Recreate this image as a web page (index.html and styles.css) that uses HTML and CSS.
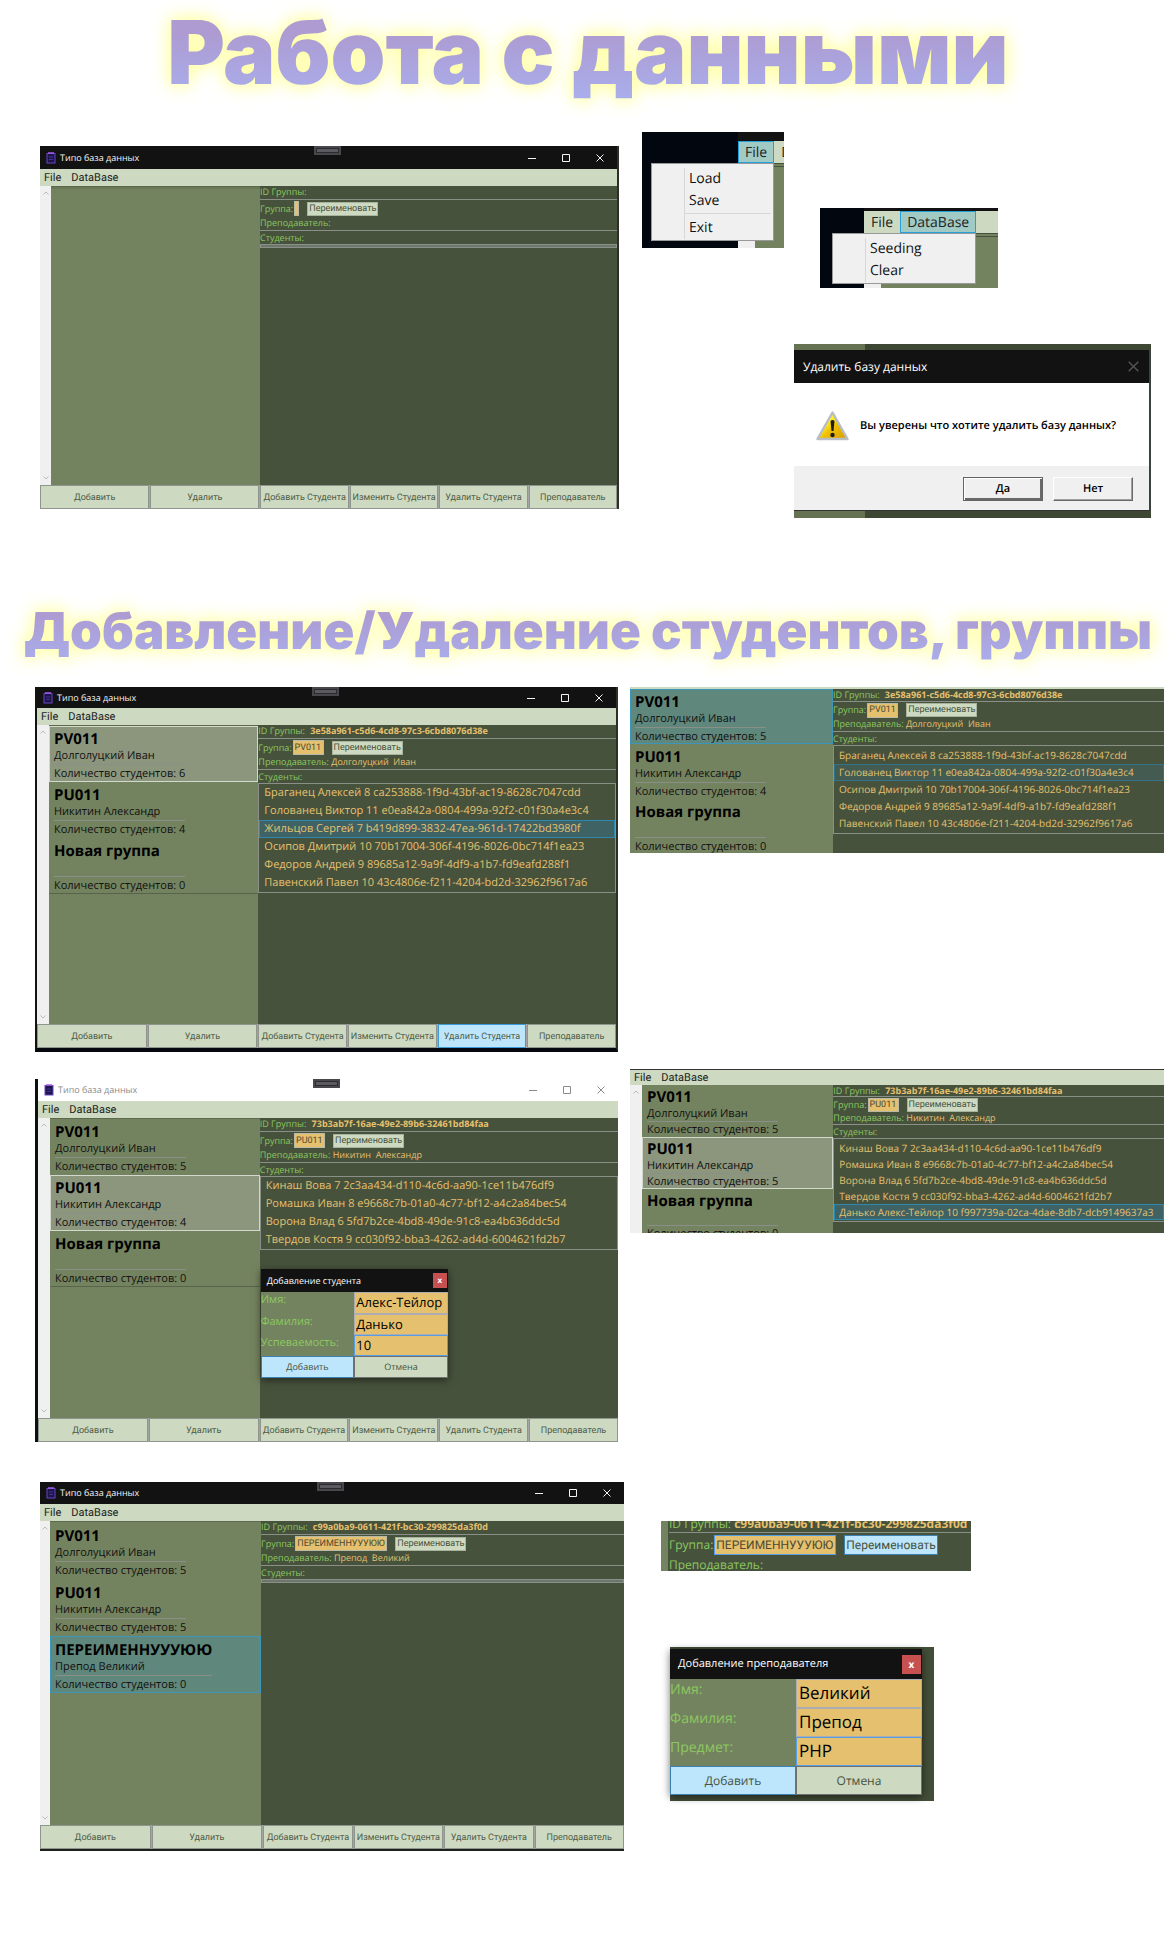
FILE: index.html
```html
<!DOCTYPE html>
<html lang="ru">
<head>
<meta charset="utf-8">
<meta name="viewport" content="width=device-width, initial-scale=1">
<title>Типо база данных</title>
<link rel="stylesheet" href="styles.css">
</head>
<body>
<svg class="sprite" aria-hidden="true">
  <symbol id="app" viewBox="0 0 10 12"><rect x="1" y="1.5" width="8" height="9.5" fill="#1d1548" stroke="#6a45c8"/><path d="M2 1h6" stroke="#a45cf0" stroke-width="1.5"/><path d="M3 5h4M3 7.500h4" stroke="#40349a"/></symbol>
  <symbol id="min" viewBox="0 0 8 8"><path d="M0 4.500h8" stroke="currentColor"/></symbol>
  <symbol id="max" viewBox="0 0 8 8"><path d="M.5.5h7v7h-7z" fill="none" stroke="currentColor"/></symbol>
  <symbol id="close" viewBox="0 0 8 8"><path d="M.5.5l7 7M7.500.5l-7 7" fill="none" stroke="currentColor"/></symbol>
  <symbol id="up" viewBox="0 0 6 4"><path d="M.5 3.500L3 1l2.500 2.500" fill="none" stroke="currentColor"/></symbol>
  <symbol id="down" viewBox="0 0 6 4"><path d="M.5.5L3 3 5.500.5" fill="none" stroke="currentColor"/></symbol>
</svg>

<main>
<section class="data">
  <h1>Работа с данными</h1>
  <div class="data-grid">
    <article class="window first">
      <header class="titlebar"><svg class="logo"><use href="#app"/></svg><span>Типо база данных</span><i class="grip"></i>
        <button aria-label="Свернуть"><svg><use href="#min"/></svg></button><button aria-label="Развернуть"><svg><use href="#max"/></svg></button><button aria-label="Закрыть"><svg><use href="#close"/></svg></button></header>
      <nav class="menubar"><button>File</button><button>DataBase</button></nav>
      <div class="workspace">
        <div class="scroll"><svg><use href="#up"/></svg><svg><use href="#down"/></svg></div>
        <ul class="groups empty"></ul>
        <div class="details">
          <p class="id">ID Группы:</p>
          <div class="rename"><label for="n1">Группа:</label><input id="n1" class="none" value=""><button>Переименовать</button></div>
          <p class="teacher">Преподаватель:</p>
          <p class="caption">Студенты:</p>
          <ul class="students"></ul>
        </div>
      </div>
      <footer class="actions"><button>Добавить</button><button>Удалить</button><button>Добавить Студента</button><button>Изменить Студента</button><button>Удалить Студента</button><button>Преподаватель</button></footer>
    </article>

    <div class="popups">
      <div class="menus">
        <div class="snip file-snip">
          <div class="corner">
            <nav class="menubar big"><button class="open">File</button><button>DataBase</button></nav>
            <div class="under"></div>
          </div>
          <div class="dropdown"><button>Load</button><button>Save</button><hr><button>Exit</button></div>
        </div>
        <div class="snip base-snip">
          <div class="corner">
            <nav class="menubar big"><button>File</button><button class="open">DataBase</button></nav>
            <div class="under"></div>
          </div>
          <div class="dropdown"><button>Seeding</button><button>Clear</button></div>
        </div>
      </div>
      <div class="confirm-back">
        <div class="confirm" role="dialog" aria-labelledby="ct">
          <header><span id="ct">Удалить базу данных</span><button aria-label="Закрыть"><svg><use href="#close"/></svg></button></header>
          <div class="message">
            <svg viewBox="0 0 33 30"><defs><linearGradient id="w" x1="0" y1="0" x2="1" y2="1"><stop offset=".35" stop-color="#fff02a"/><stop offset=".55" stop-color="#f0c000"/><stop offset="1" stop-color="#d89a00"/></linearGradient></defs><path d="M16.500 1.500L31.500 28h-30z" fill="url(#w)" stroke="#b9bec6" stroke-width="2.500" stroke-linejoin="round"/><path d="M14.500 10q2-2 4 0l-1 10h-2z" fill="#1c1c1c"/><circle cx="16.500" cy="24" r="2.200" fill="#1c1c1c"/></svg>
            <p>Вы уверены что хотите удалить базу данных?</p>
          </div>
          <footer><button class="default">Да</button><button>Нет</button></footer>
        </div>
      </div>
    </div>
  </div>
</section>

<section class="edit">
  <h2>Добавление/Удаление студентов, группы</h2>
  <div class="pair">
    <article class="window second">
      <header class="titlebar"><svg class="logo"><use href="#app"/></svg><span>Типо база данных</span><i class="grip"></i>
        <button aria-label="Свернуть"><svg><use href="#min"/></svg></button><button aria-label="Развернуть"><svg><use href="#max"/></svg></button><button aria-label="Закрыть"><svg><use href="#close"/></svg></button></header>
      <nav class="menubar"><button>File</button><button>DataBase</button></nav>
      <div class="workspace">
        <div class="scroll"><svg><use href="#up"/></svg><svg><use href="#down"/></svg></div>
        <ul class="groups">
          <li class="idle"><div><h3>PV011</h3><p>Долголуцкий Иван</p><p class="count">Количество студентов: 6</p></div></li>
          <li><div><h3>PU011</h3><p>Никитин Александр</p><p class="count">Количество студентов: 4</p></div></li>
          <li><div><h3>Новая группа</h3><p></p><p class="count">Количество студентов: 0</p></div></li>
        </ul>
        <div class="details">
          <p class="id">ID Группы: <b>3e58a961-c5d6-4cd8-97c3-6cbd8076d38e</b></p>
          <div class="rename"><label for="n2">Группа:</label><input id="n2" value="PV011"><button>Переименовать</button></div>
          <p class="teacher">Преподаватель: <span>Долголуцкий&nbsp; Иван</span></p>
          <p class="caption">Студенты:</p>
          <ul class="students">
            <li>Браганец Алексей 8 ca253888-1f9d-43bf-ac19-8628c7047cdd</li>
            <li>Голованец Виктор 11 e0ea842a-0804-499a-92f2-c01f30a4e3c4</li>
            <li class="selected">Жильцов Сергей 7 b419d899-3832-47ea-961d-17422bd3980f</li>
            <li>Осипов Дмитрий 10 70b17004-306f-4196-8026-0bc714f1ea23</li>
            <li>Федоров Андрей 9 89685a12-9a9f-4df9-a1b7-fd9eafd288f1</li>
            <li>Павенский Павел 10 43c4806e-f211-4204-bd2d-32962f9617a6</li>
          </ul>
        </div>
      </div>
      <footer class="actions"><button>Добавить</button><button>Удалить</button><button>Добавить Студента</button><button>Изменить Студента</button><button class="hot">Удалить Студента</button><button>Преподаватель</button></footer>
    </article>

    <article class="fragment removed">
      <div class="workspace">
        <ul class="groups">
          <li class="active"><div><h3>PV011</h3><p>Долголуцкий Иван</p><p class="count">Количество студентов: 5</p></div></li>
          <li><div><h3>PU011</h3><p>Никитин Александр</p><p class="count">Количество студентов: 4</p></div></li>
          <li><div><h3>Новая группа</h3><p></p><p class="count">Количество студентов: 0</p></div></li>
        </ul>
        <div class="details">
          <p class="id">ID Группы: <b>3e58a961-c5d6-4cd8-97c3-6cbd8076d38e</b></p>
          <div class="rename"><label for="n3">Группа:</label><input id="n3" value="PV011"><button>Переименовать</button></div>
          <p class="teacher">Преподаватель: <span>Долголуцкий&nbsp; Иван</span></p>
          <p class="caption">Студенты:</p>
          <ul class="students">
            <li>Браганец Алексей 8 ca253888-1f9d-43bf-ac19-8628c7047cdd</li>
            <li class="selected dim">Голованец Виктор 11 e0ea842a-0804-499a-92f2-c01f30a4e3c4</li>
            <li>Осипов Дмитрий 10 70b17004-306f-4196-8026-0bc714f1ea23</li>
            <li>Федоров Андрей 9 89685a12-9a9f-4df9-a1b7-fd9eafd288f1</li>
            <li>Павенский Павел 10 43c4806e-f211-4204-bd2d-32962f9617a6</li>
          </ul>
        </div>
      </div>
    </article>
  </div>

  <div class="pair adding">
    <article class="window third">
      <header class="titlebar"><svg class="logo"><use href="#app"/></svg><span>Типо база данных</span><i class="grip"></i>
        <button aria-label="Свернуть"><svg><use href="#min"/></svg></button><button aria-label="Развернуть"><svg><use href="#max"/></svg></button><button aria-label="Закрыть"><svg><use href="#close"/></svg></button></header>
      <nav class="menubar"><button>File</button><button>DataBase</button></nav>
      <div class="workspace">
        <div class="scroll"><svg><use href="#up"/></svg><svg><use href="#down"/></svg></div>
        <ul class="groups">
          <li><div><h3>PV011</h3><p>Долголуцкий Иван</p><p class="count">Количество студентов: 5</p></div></li>
          <li class="idle"><div><h3>PU011</h3><p>Никитин Александр</p><p class="count">Количество студентов: 4</p></div></li>
          <li><div><h3>Новая группа</h3><p></p><p class="count">Количество студентов: 0</p></div></li>
        </ul>
        <div class="details">
          <p class="id">ID Группы: <b>73b3ab7f-16ae-49e2-89b6-32461bd84faa</b></p>
          <div class="rename"><label for="n4">Группа:</label><input id="n4" value="PU011"><button>Переименовать</button></div>
          <p class="teacher">Преподаватель: <span>Никитин&nbsp; Александр</span></p>
          <p class="caption">Студенты:</p>
          <ul class="students">
            <li>Кинаш Вова 7 2c3aa434-d110-4c6d-aa90-1ce11b476df9</li>
            <li>Ромашка Иван 8 e9668c7b-01a0-4c77-bf12-a4c2a84bec54</li>
            <li>Ворона Влад 6 5fd7b2ce-4bd8-49de-91c8-ea4b636ddc5d</li>
            <li>Твердов Костя 9 cc030f92-bba3-4262-ad4d-6004621fd2b7</li>
          </ul>
          <form class="form-window small" aria-label="Добавление студента">
            <header><span>Добавление студента</span><button type="button" aria-label="Закрыть">x</button></header>
            <label for="s1">Имя:</label><input id="s1" value="Алекс-Тейлор">
            <label for="s2">Фамилия:</label><input id="s2" value="Данько">
            <label for="s3">Успеваемость:</label><input id="s3" class="focus" value="10">
            <button type="button" class="hot">Добавить</button><button type="button">Отмена</button>
          </form>
        </div>
      </div>
      <footer class="actions"><button>Добавить</button><button>Удалить</button><button>Добавить Студента</button><button>Изменить Студента</button><button>Удалить Студента</button><button>Преподаватель</button></footer>
    </article>

    <article class="fragment added">
      <nav class="menubar"><button>File</button><button>DataBase</button></nav>
      <div class="workspace">
        <div class="scroll"><svg><use href="#up"/></svg></div>
        <ul class="groups">
          <li><div><h3>PV011</h3><p>Долголуцкий Иван</p><p class="count">Количество студентов: 5</p></div></li>
          <li class="idle"><div><h3>PU011</h3><p>Никитин Александр</p><p class="count">Количество студентов: 5</p></div></li>
          <li><div><h3>Новая группа</h3><p></p><p class="count">Количество студентов: 0</p></div></li>
        </ul>
        <div class="details">
          <p class="id">ID Группы: <b>73b3ab7f-16ae-49e2-89b6-32461bd84faa</b></p>
          <div class="rename"><label for="n5">Группа:</label><input id="n5" value="PU011"><button>Переименовать</button></div>
          <p class="teacher">Преподаватель: <span>Никитин&nbsp; Александр</span></p>
          <p class="caption">Студенты:</p>
          <ul class="students">
            <li>Кинаш Вова 7 2c3aa434-d110-4c6d-aa90-1ce11b476df9</li>
            <li>Ромашка Иван 8 e9668c7b-01a0-4c77-bf12-a4c2a84bec54</li>
            <li>Ворона Влад 6 5fd7b2ce-4bd8-49de-91c8-ea4b636ddc5d</li>
            <li>Твердов Костя 9 cc030f92-bba3-4262-ad4d-6004621fd2b7</li>
            <li class="selected">Данько Алекс-Тейлор 10 f997739a-02ca-4dae-8db7-dcb9149637a3</li>
          </ul>
        </div>
      </div>
    </article>
  </div>

  <div class="pair renaming">
    <article class="window fourth">
      <header class="titlebar"><svg class="logo"><use href="#app"/></svg><span>Типо база данных</span><i class="grip"></i>
        <button aria-label="Свернуть"><svg><use href="#min"/></svg></button><button aria-label="Развернуть"><svg><use href="#max"/></svg></button><button aria-label="Закрыть"><svg><use href="#close"/></svg></button></header>
      <nav class="menubar"><button>File</button><button>DataBase</button></nav>
      <div class="workspace">
        <div class="scroll"><svg><use href="#up"/></svg><svg><use href="#down"/></svg></div>
        <ul class="groups">
          <li><div><h3>PV011</h3><p>Долголуцкий Иван</p><p class="count">Количество студентов: 5</p></div></li>
          <li><div><h3>PU011</h3><p>Никитин Александр</p><p class="count">Количество студентов: 5</p></div></li>
          <li class="active"><div><h3>ПЕРЕИМЕННУУУЮЮ</h3><p>Препод Великий</p><p class="count">Количество студентов: 0</p></div></li>
        </ul>
        <div class="details">
          <p class="id">ID Группы: <b>c99a0ba9-0611-421f-bc30-299825da3f0d</b></p>
          <div class="rename"><label for="n6">Группа:</label><input id="n6" class="long" value="ПЕРЕИМЕННУУУЮЮ"><button>Переименовать</button></div>
          <p class="teacher">Преподаватель: <span>Препод&nbsp; Великий</span></p>
          <p class="caption">Студенты:</p>
          <ul class="students"></ul>
        </div>
      </div>
      <footer class="actions"><button>Добавить</button><button>Удалить</button><button>Добавить Студента</button><button>Изменить Студента</button><button>Удалить Студента</button><button>Преподаватель</button></footer>
    </article>

    <div class="closeups">
      <div class="rename-zoom">
        <div class="details">
          <p class="id">ID Группы: <b>c99a0ba9-0611-421f-bc30-299825da3f0d</b></p>
          <div class="rename"><label for="n7">Группа:</label><input id="n7" class="long focus" value="ПЕРЕИМЕННУУУЮЮ"><button class="hot">Переименовать</button></div>
          <p class="teacher">Преподаватель:</p>
        </div>
      </div>
      <div class="teacher-back">
        <form class="form-window" aria-label="Добавление преподавателя">
          <header><span>Добавление преподавателя</span><button type="button" aria-label="Закрыть">x</button></header>
          <label for="t1">Имя:</label><input id="t1" value="Великий">
          <label for="t2">Фамилия:</label><input id="t2" value="Препод">
          <label for="t3">Предмет:</label><input id="t3" class="focus" value="PHP">
          <button type="button" class="hot">Добавить</button><button type="button">Отмена</button>
        </form>
      </div>
    </div>
  </div>
</section>
</main>
</body>
</html>
```

FILE: styles.css
```css
:root {
  --olive: #74835f;
  --dark: #47523c;
  --mint: #cddac1;
  --amber: #e5c06f;
  --lime: #8cc860;
  --rule: #8a8f88;
  --sky: #bde6fd;
  --ink: #111;
  --narrow: Roboto, "Noto Sans", sans-serif;
}

* { box-sizing: border-box; }

body {
  margin: 0;
  background: #fff;
  font: 11px/16px "Open Sans", "Noto Sans", sans-serif;
  text-rendering: geometricPrecision;
  color: var(--ink);
}

h1, h2, h3, p, ul { margin: 0; padding: 0; font: inherit; }
ul { list-style: none; }
button, input { margin: 0; padding: 0; border: 0; border-radius: 0; background: none; font: inherit; color: inherit; outline: 0; text-rendering: inherit; }
button { white-space: nowrap; }
.sprite { position: absolute; width: 0; height: 0; }

/* Headings */
h1, h2 {
  font-family: Inter, "Open Sans", sans-serif;
  font-weight: 900;
  font-optical-sizing: none;
  text-align: center;
  white-space: nowrap;
  color: transparent;
  background: linear-gradient(#ad9bd2 25%, #a9b0ee 80%);
  background-clip: text;
  -webkit-background-clip: text;
  filter: drop-shadow(0 0 8px #ffffa8) drop-shadow(0 0 8px #ffffc4);
}
h1 { font-size: 88px; line-height: 106px; padding-bottom: 26px; }
h2 { font-size: 51px; line-height: 84px; padding-bottom: 13px; }

/* Page grid */
.data-grid {
  display: grid;
  grid-template-columns: minmax(0, 579fr) minmax(0, 509fr);
  column-gap: 23px;
  padding: 0 25px 0 40px;
  align-items: start;
}
.edit { padding-top: 72px; }
.pair {
  display: grid;
  grid-template-columns: minmax(0, 583fr) minmax(0, 534fr);
  column-gap: 12px;
  padding: 0 12px 0 35px;
  align-items: start;
}
.pair.adding { padding-top: 17px; }
.pair.renaming {
  grid-template-columns: minmax(0, 584fr) minmax(0, 503fr);
  column-gap: 37px;
  padding: 40px 12px 88px 40px;
}

/* Application window */
.window {
  border-right: 2px solid #2c3026;
  background: var(--dark);
}
.window.first { margin-top: 14px; }
.window.second { border-left: 2px solid #10130f; border-bottom: 4px solid #05080e; }
.window.third { margin-top: 10px; border-left: 3px solid #0a1210; border-right: 0; }
.window.fourth { border-right: 0; border-bottom: 2px solid #1d211c; }

.titlebar {
  position: relative;
  display: flex;
  align-items: center;
  height: 22px;
  padding-left: 6px;
  background: #121212;
  color: #f4f4f4;
  font-size: 9px;
}
.first .titlebar { height: 23px; }
.second .titlebar { height: 21px; }
.third .titlebar { background: #fff; color: #8b8b8b; }
.titlebar .logo { width: 10px; height: 12px; margin-right: 4px; }
.titlebar span { flex: 1; }
.titlebar button { width: 34px; height: 100%; }
.titlebar button svg { display: block; width: 8px; height: 8px; margin: auto; }
.grip {
  position: absolute;
  top: 0;
  left: 50%;
  width: 27px;
  height: 9px;
  margin-left: -15px;
  border: 2px solid #48484c;
  background: #5a5a60;
  box-shadow: inset 0 0 0 1px #2b2b30;
}

.menubar { display: flex; height: 17px; background: var(--mint); color: #222; }
.menubar button { padding: 0 5px; line-height: 16px; }
.window .menubar button, .added .menubar button { padding: 0 6px 0 4px; font-family: var(--narrow); }

.workspace { display: grid; grid-template-columns: 12px minmax(0, 209fr) minmax(0, 357fr); }
.window .workspace { min-height: 300px; }
.window.second .workspace { min-height: 299px; }
.window.first .workspace { min-height: 299px; grid-template-columns: 11px minmax(0, 209fr) minmax(0, 357fr); }
.window.fourth .workspace { min-height: 304px; grid-template-columns: 10px minmax(0, 211fr) minmax(0, 363fr); }

.scroll { display: flex; flex-direction: column; justify-content: space-between; align-items: center; padding: 5px 0; background: #f0f0f0; color: #bbb; }
.scroll svg { width: 6px; height: 4px; }

.groups { background: var(--olive); border-top: 1px solid #5d694d; overflow: hidden; }
.groups.empty { box-shadow: inset 0 2px #6a7857; }
.groups li { height: 56px; padding: 3px 4px 0; border: 1px solid transparent; }
.fourth .groups li { height: 57px; padding-top: 4px; }
.groups li div { width: fit-content; }
.groups li:last-child { border-bottom-color: #58644a; }
.groups li.idle { background: #8c967d; border-color: #d3d8cd; }
.groups li.active { background: #60877b; border-color: #3d96b8; }
.groups h3 { font-size: 15px; line-height: 18px; font-weight: 700; color: #000; }
.groups p { height: 16px; white-space: nowrap; }
.groups .count { border-top: 1px solid var(--rule); line-height: 17px; height: 18px; }

.details { position: relative; min-width: 0; background: var(--dark); color: var(--lime); font-size: 9px; line-height: 12px; white-space: nowrap; }
.details .id { height: 14px; border-bottom: 1px solid var(--rule); }
.details b { margin-left: 3px; color: var(--amber); font-weight: 700; }
.details .teacher { height: 14px; border-bottom: 1px solid var(--rule); }
.details .teacher span { color: var(--amber); }
.details .caption { height: 13px; line-height: 14px; }

.rename { display: flex; align-items: center; height: 17px; }
.rename input { width: 31px; height: 15px; margin: 0 8px 0 1px; padding: 0 1px; border: 1px solid #b9b9a8; background: var(--amber); color: #4d4a30; font-family: var(--narrow); }
.rename input.none { width: 5px; padding: 0; }
.rename input.long { width: 92px; }
.rename button { height: 14px; padding: 0 1px; border: 1px solid #a7b39c; background: var(--mint); color: #47523c; line-height: 12px; font-family: var(--narrow); }

.students { min-height: 4px; border: 1px solid var(--rule); color: var(--amber); font-size: 11px; }
.students:empty { background: #6c766a; }
.students li { height: 18px; padding: 0 4px; border: 1px solid transparent; line-height: 16px; overflow: hidden; }
.students .selected { background: #3f6264; border-color: #2b88b0; }
.students .dim { background: #435b50; border-color: #32728a; }

.actions { display: grid; grid-template-columns: 110fr 110fr repeat(4, 89fr); height: 24px; gap: 1px; background: #a4a4a4; }
.actions button { min-width: 0; padding-top: 2px; border: 1px solid #8f948c; background: var(--mint); color: #505c48; font-family: var(--narrow); font-size: 9px; }
.actions .hot { background: var(--sky); border-color: #3c9ad6; }

/* Cropped parts of the window */
.fragment { overflow: hidden; background: var(--dark); }
.removed { border-top: 2px solid var(--mint); }
.removed .workspace { height: 164px; grid-template-columns: minmax(0, 203fr) minmax(0, 331fr); }
.removed .groups { border-top: 0; }
.removed .groups li { height: 55px; }
.removed .id { height: 13px; }
.removed .rename { height: 16px; }
.removed .students, .added .students { padding: 1px 0; border-right: 0; font-size: 10px; }
.removed .students li { height: 17px; line-height: 15px; }
.added { border-top: 1px solid #333; }
.added .menubar { height: 15px; }
.added .menubar button { line-height: 15px; }
.added .workspace { height: 148px; grid-template-columns: 12px minmax(0, 191fr) minmax(0, 330fr); }
.added .groups { border-top: 0; }
.added .groups li { height: 52px; }
.added .groups h3 { line-height: 17px; }
.added .groups p { height: 15px; line-height: 15px; }
.added .groups .count { height: 17px; line-height: 16px; }
.added .id { height: 12px; line-height: 11px; }
.added .rename { height: 15px; }
.added .rename input { height: 14px; }
.added .teacher { height: 13px; }
.added .students li { height: 16px; line-height: 14px; }

/* Menu popups */
.popups { display: flex; flex-direction: column; gap: 56px; }
.menus { display: flex; align-items: start; gap: 36px; }
.snip { position: relative; overflow: hidden; background: #02060f; }
.file-snip { width: 142px; height: 116px; padding-left: 96px; }
.base-snip { width: 178px; height: 80px; margin-top: 76px; padding-left: 44px; }
.corner { height: 100%; display: flex; flex-direction: column; border-top: 9px solid #121212; }
.base-snip .corner { border-top-width: 3px; }
.menubar.big { height: 22px; overflow: hidden; font-size: 14px; }
.menubar.big button { padding: 1px 6px 0; border: 1px solid transparent; line-height: 20px; }
.menubar.big .open { background: #a2cac5; border-color: #26a0da; }
.under { flex: 1; border-left: 17px solid #f0f0f0; background: var(--olive); box-shadow: inset 0 1px #47523c, inset 0 3px var(--olive), inset 0 4px #47523c; }
.dropdown { position: absolute; left: 9px; top: 31px; width: 123px; padding: 4px 2px 1px 32px; border: 1px solid #999; background: #f0f0f0; font-size: 14px; line-height: 22px; }
.base-snip .dropdown { left: 12px; top: 25px; width: 144px; }
.dropdown button { display: block; width: 100%; padding-left: 4px; border-left: 1px solid #d7d7d7; text-align: left; }
.dropdown hr { height: 5px; margin: 0; border: 0; border-left: 1px solid #d7d7d7; background: linear-gradient(#d7d7d7, #d7d7d7) 0 1px / 100% 1px no-repeat; }

/* Confirmation */
.confirm-back { align-self: flex-end; width: 357px; padding: 6px 0 7px; background: linear-gradient(90deg, #667352 71px, #3d4733 71px); }
.confirm { border-right: 2px solid #3a4340; border-bottom: 1px solid #333; background: #f0f0f0; font-size: 12px; }
.confirm header { display: flex; align-items: center; justify-content: space-between; height: 33px; padding: 0 10px 0 9px; background: #121212; color: #fff; }
.confirm header button { color: #555; height: 11px; }
.confirm header svg { display: block; width: 11px; height: 11px; }
.message { display: flex; align-items: center; gap: 11px; height: 83px; padding: 3px 0 0 22px; background: #fff; color: #000; white-space: nowrap; font-size: 11px; font-weight: 600; }
.message svg { width: 33px; height: 30px; }
.confirm footer { display: flex; justify-content: flex-end; gap: 10px; height: 44px; padding: 11px 16px 0 0; }
.confirm footer button { width: 80px; height: 24px; border: 1px solid; border-color: #fff #696969 #696969 #fff; box-shadow: inset -1px -1px #a0a0a0; color: #000; font-size: 11px; font-weight: 600; }
.confirm footer .default { border: 1px solid #646464; box-shadow: inset 1px 1px #fff, inset -2px -2px #696969; }

/* Form windows */
.form-window { display: grid; grid-template-columns: 1fr 1fr; grid-template-rows: 30px repeat(4, 29px); background: var(--olive); box-shadow: 0 2px 8px #0008; font-size: 14px; line-height: 22px; color: var(--lime); }
.form-window header { grid-column: 1 / -1; display: flex; align-items: center; justify-content: space-between; padding: 0 1px 0 8px; background: #121212; color: #fff; font-size: 11px; }
.form-window header button { width: 19px; height: 19px; background: #c75050; color: #fff; font-size: 10px; font-weight: 700; line-height: 16px; }
.form-window input { min-width: 0; padding: 0 2px 2px; border: 1px solid #abadb3; background: var(--amber); color: #000; font-size: 17px; }
.form-window input.focus, .rename input.focus { border-color: #569de5; }
.form-window > button { border: 1px solid #707070; background: var(--mint); color: #47523c; font-size: 12px; }
.form-window > .hot, .rename .hot { border-color: #3c7fb1; background: var(--sky); }
.form-window.small { position: absolute; left: 1px; top: 151px; width: 187px; grid-template-rows: 23px 22px 21px 21px 22px; font-size: 11px; line-height: 16px; }
.small header { padding-left: 6px; font-size: 9px; }
.small header button { width: 14px; height: 15px; font-size: 8px; line-height: 12px; }
.small input { font-size: 13px; padding: 0 1px 2px; }
.small > button { font-size: 9px; }

.closeups { display: flex; flex-direction: column; align-items: start; gap: 76px; padding-top: 39px; }
.rename-zoom { width: 310px; height: 50px; padding-left: 8px; overflow: hidden; display: flex; align-items: flex-end; background: linear-gradient(90deg, var(--olive) 7px, var(--dark) 7px); }
.rename-zoom .details { width: 100%; font-size: 12px; line-height: 16px; }
.rename-zoom .id { height: 17px; }
.rename-zoom .id b { margin-left: 0; }
.rename-zoom .rename { height: 24px; }
.rename-zoom .teacher { border: 0; height: 14px; }
.rename-zoom .rename input { width: 122px; height: 20px; margin-right: 8px; }
.rename-zoom .rename button { height: 20px; line-height: 18px; }
.teacher-back { width: 264px; margin-left: 9px; padding: 2px 12px 6px 0; background: #434e38; }
```
